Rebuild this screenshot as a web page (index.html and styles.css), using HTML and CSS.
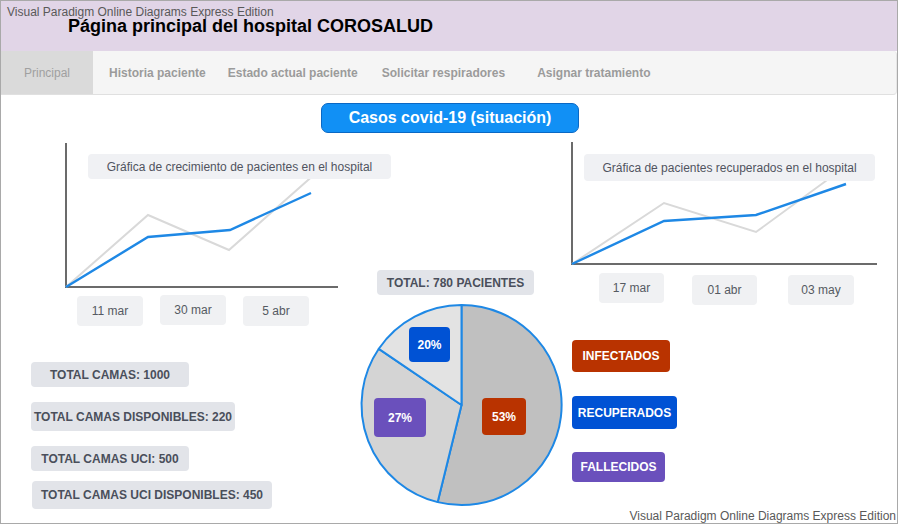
FILE: index.html
```html
<!DOCTYPE html>
<html lang="es">
<head>
<meta charset="utf-8">
<title>COROSALUD</title>
<link rel="stylesheet" href="styles.css">
</head>
<body>
<div class="frame">
  <header class="header">
    <div class="wm">Visual Paradigm Online Diagrams Express Edition</div>
    <h1 class="title">Página principal del hospital COROSALUD</h1>
  </header>
  <nav class="nav">
    <a class="tab active">Principal</a>
    <a class="tab t-hist">Historia paciente</a>
    <a class="tab t-est">Estado actual paciente</a>
    <a class="tab t-sol">Solicitar respiradores</a>
    <a class="tab t-asig">Asignar tratamiento</a>
  </nav>
  <main class="canvas">
    <div class="banner">Casos covid-19 (situación)</div>

    <svg class="plot" width="896" height="428" viewBox="1 95 896 428" xmlns="http://www.w3.org/2000/svg">
      <g fill="none" stroke-linejoin="miter">
        <path d="M66 143 V287 H338" stroke="#6b6b6b" stroke-width="2"/>
        <polyline points="66,287 148,215 229,250 316,173" stroke="#d9d9d9" stroke-width="2"/>
        <polyline points="66,287 148,237 230,230 311,193" stroke="#1e88e5" stroke-width="2.4"/>

        <path d="M572 142 V264 H877" stroke="#6b6b6b" stroke-width="2"/>
        <polyline points="572,264 664,203 756,232 834,175" stroke="#d9d9d9" stroke-width="2"/>
        <polyline points="572,264 664,221 756,215 846,184" stroke="#1e88e5" stroke-width="2.4"/>
      </g>
      <g stroke="#1e88e5" stroke-width="2" stroke-linejoin="round">
        <path d="M461.5 405 L461.5 305 A100 100 0 1 1 437.7 502.1 Z" fill="#c0c0c0"/>
        <path d="M461.5 405 L437.7 502.1 A100 100 0 0 1 378.8 348.8 Z" fill="#d4d4d4"/>
        <path d="M461.5 405 L378.8 348.8 A100 100 0 0 1 461.5 305 Z" fill="#e3e3e3"/>
      </g>
    </svg>

    <div class="node chart-title ct-left">Gráfica de crecimiento de pacientes en el hospital</div>
    <div class="node chart-title ct-right">Gráfica de pacientes recuperados en el hospital</div>

    <div class="node dates dates-left">
      <span class="date">11 mar</span>
      <span class="date d-up">30 mar</span>
      <span class="date">5 abr</span>
    </div>
    <div class="node dates dates-right">
      <span class="date">17 mar</span>
      <span class="date d-r2">01 abr</span>
      <span class="date d-r3">03 may</span>
    </div>

    <div class="node total">TOTAL: 780 PACIENTES</div>

    <div class="node stats">
      <div class="stat s1">TOTAL CAMAS: 1000</div>
      <div class="stat s2">TOTAL CAMAS DISPONIBLES: 220</div>
      <div class="stat s3">TOTAL CAMAS UCI: 500</div>
      <div class="stat s4">TOTAL CAMAS UCI DISPONIBLES: 450</div>
    </div>

    <div class="node pct p20 blue">20%</div>
    <div class="node pct p27 purple">27%</div>
    <div class="node pct p53 red">53%</div>

    <div class="node legend">
      <div class="leg red l1">INFECTADOS</div>
      <div class="leg blue l2">RECUPERADOS</div>
      <div class="leg purple l3">FALLECIDOS</div>
    </div>

    <div class="wm wm-bottom">Visual Paradigm Online Diagrams Express Edition</div>
  </main>
</div>
</body>
</html>
```

FILE: styles.css
```css
* { box-sizing: border-box; }

html, body {
  margin: 0;
  padding: 0;
  background: #ffffff;
}

body {
  font-family: "Liberation Sans", Arial, sans-serif;
  color: #000;
}

.frame {
  width: 898px;
  height: 524px;
  border: 1px solid #a9a9a9;
  display: flex;
  flex-direction: column;
  overflow: hidden;
}

.header {
  height: 50px;
  background: #e1d5e7;
  padding: 5px 0 0 6px;
  flex: none;
}

.wm {
  font-size: 12px;
  line-height: 12px;
  color: #595959;
  white-space: nowrap;
}

.title {
  margin: 1px 0 0 61px;
  font-size: 18px;
  line-height: 15px;
  font-weight: bold;
  color: #000;
  white-space: nowrap;
}

.nav {
  height: 44px;
  flex: none;
  display: flex;
  align-items: stretch;
  background: #f5f5f5;
  border-bottom: 1px solid #e0e0e0;
  border-right: 1px solid #e6e6e6;
  border-radius: 0 4px 4px 0;
}

.tab {
  display: flex;
  align-items: center;
  font-size: 12px;
  font-weight: bold;
  color: #9b9b9b;
  white-space: nowrap;
}

.tab.active {
  width: 92px;
  justify-content: center;
  background: #dadada;
  font-weight: normal;
  color: #a0a0a0;
}

.t-hist { margin-left: 16px; }
.t-est { margin-left: 22px; }
.t-sol { margin-left: 24px; }
.t-asig { margin-left: 32px; }

.canvas {
  position: relative;
  flex: 1;
}

.banner {
  width: 258px;
  height: 30px;
  margin: 8px 0 0 320px;
  background: #1190f5;
  border: 1px solid #0a68c4;
  border-radius: 7px;
  color: #ffffff;
  font-size: 16px;
  font-weight: bold;
  display: flex;
  align-items: center;
  justify-content: center;
  white-space: nowrap;
}

.plot {
  position: absolute;
  left: 0;
  top: 0;
}

.node {
  position: absolute;
}

.chart-title {
  background: #f0f1f4;
  border-radius: 4px;
  font-size: 12px;
  color: #50545f;
  display: flex;
  align-items: center;
  justify-content: center;
  white-space: nowrap;
}

.ct-left { left: 87px; top: 59px; width: 303px; height: 25px; }
.ct-right { left: 583px; top: 59px; width: 291px; height: 27px; }

.dates {
  display: flex;
  align-items: flex-start;
}

.date {
  width: 66px;
  height: 30px;
  background: #f0f1f3;
  border-radius: 4px;
  font-size: 12px;
  color: #555a62;
  display: flex;
  align-items: center;
  justify-content: center;
}

.dates-left { left: 76px; top: 201px; gap: 17px; }
.dates-left .d-up { margin-top: -1px; }

.dates-right { left: 598px; top: 178px; }
.dates-right .date { width: 65px; }
.dates-right .d-r2 { margin: 2px 0 0 28px; }
.dates-right .d-r3 { margin: 2px 0 0 31px; width: 66px; }

.total {
  left: 376px;
  top: 175px;
  width: 157px;
  height: 25px;
  background: #e2e4e9;
  border-radius: 4px;
  font-size: 12px;
  font-weight: bold;
  color: #4a4f5b;
  display: flex;
  align-items: center;
  justify-content: center;
  white-space: nowrap;
}

.stats {
  left: 30px;
  top: 267px;
  display: flex;
  flex-direction: column;
  align-items: flex-start;
}

.stat {
  background: #e2e4e9;
  border-radius: 4px;
  font-size: 12px;
  font-weight: bold;
  color: #4a4f5b;
  display: flex;
  align-items: center;
  justify-content: center;
  white-space: nowrap;
}

.s1 { width: 158px; height: 25px; }
.s2 { width: 204px; height: 29px; margin-top: 15px; }
.s3 { width: 158px; height: 25px; margin-top: 15px; }
.s4 { width: 240px; height: 28px; margin-top: 10px; margin-left: 1px; }

.pct, .leg {
  color: #ffffff;
  font-size: 12px;
  font-weight: bold;
  border-radius: 4px;
  display: flex;
  align-items: center;
  justify-content: center;
  white-space: nowrap;
}

.red { background: #b93300; }
.blue { background: #0052d4; }
.purple { background: #6a50bc; }

.p20 { left: 408px; top: 232px; width: 41px; height: 35px; }
.p27 { left: 373px; top: 303px; width: 52px; height: 39px; }
.p53 { left: 481px; top: 303px; width: 44px; height: 37px; }

.legend {
  left: 571px;
  top: 245px;
  display: flex;
  flex-direction: column;
  align-items: flex-start;
}

.l1 { width: 98px; height: 32px; }
.l2 { width: 105px; height: 33px; margin-top: 24px; }
.l3 { width: 93px; height: 30px; margin-top: 23px; }

.wm-bottom {
  position: absolute;
  right: 1px;
  bottom: 1px;
}
```
